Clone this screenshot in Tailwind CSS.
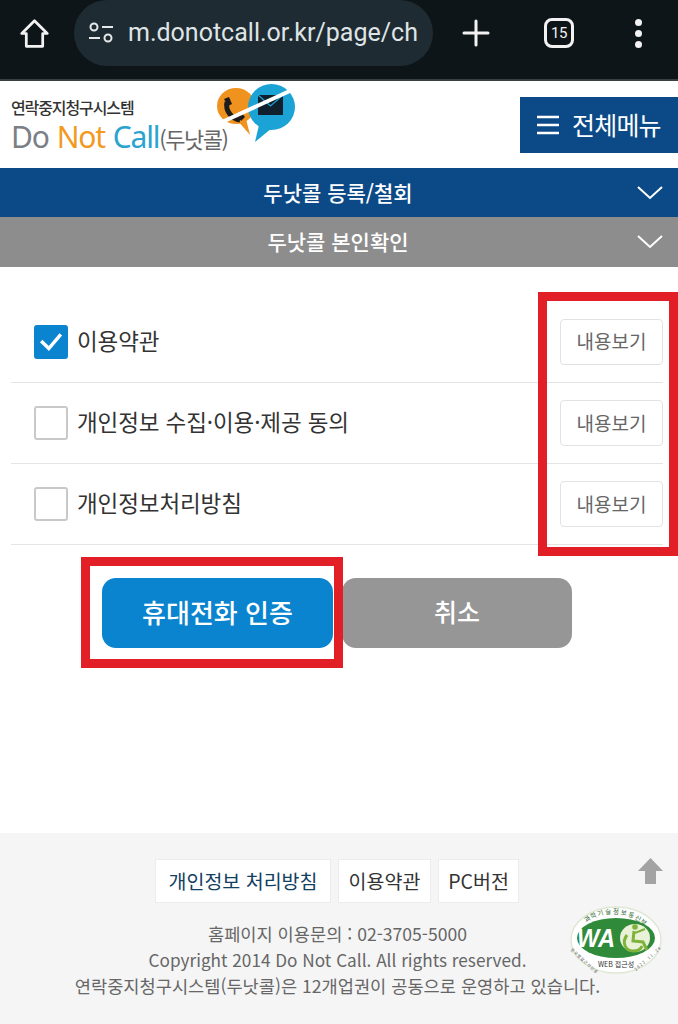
<!DOCTYPE html>
<html lang="ko">
<head>
    <meta charset="UTF-8">
    <meta name="viewport" content="width=device-width, initial-scale=1.0">
    <title>Do Not Call</title>
    <script src="https://cdn.jsdelivr.net/npm/@tailwindcss/browser@4"></script>
</head>
<body class="bg-white font-['Noto_Sans_CJK_KR','Noto_Sans',sans-serif]">
<div class="relative w-[678px] h-[1024px] overflow-hidden flex flex-col">

    <!-- browser bar -->
    <div class="h-[81px] shrink-0 bg-[#0e1519] border-b-2 border-[#3a3f42] flex items-start text-white">
        <div class="w-[74px] h-[66px] pr-[6px] flex items-center justify-center">
            <svg class="w-[31px] h-[31px]" viewBox="0 0 34 34" fill="none" stroke="#f2f2f2" stroke-width="3" stroke-linejoin="round"><path d="M17 3 L3 17 H8 V31 H26 V17 H31 Z"/></svg>
        </div>
        <div class="w-[359px] h-[66px] rounded-[33px] bg-[#1f2b32] flex items-center pl-[14px]">
            <svg class="w-[26px] h-[24px] shrink-0" viewBox="0 0 26 24" fill="none" stroke="#e4e8ea" stroke-width="2"><circle cx="6" cy="6" r="3.5"/><path d="M14 6 H25"/><path d="M1 17 H12"/><circle cx="20" cy="17" r="3.5"/></svg>
            <span class="ml-[14px] font-['Roboto',sans-serif] text-[25px] text-[#dfe4e6] whitespace-nowrap">m.donotcall.or.kr/page/ch</span>
        </div>
        <div class="w-[86px] h-[66px] flex items-center justify-center">
            <svg class="w-[28px] h-[28px]" viewBox="0 0 28 28" stroke="#f2f2f2" stroke-width="3" stroke-linecap="round"><path d="M14 2 V26 M2 14 H26"/></svg>
        </div>
        <div class="w-[80px] h-[66px] flex items-center justify-center">
            <div class="w-[30px] h-[30px] rounded-[8px] border-[3px] border-[#f2f2f2] flex items-center justify-center font-['Roboto',sans-serif] text-[15px] tracking-[-0.5px] text-[#f2f2f2]">15</div>
        </div>
        <div class="flex-1 h-[66px] flex flex-col items-center justify-center gap-[4px]">
            <span class="w-[7px] h-[7px] rounded-full bg-[#f2f2f2]"></span>
            <span class="w-[7px] h-[7px] rounded-full bg-[#f2f2f2]"></span>
            <span class="w-[7px] h-[7px] rounded-full bg-[#f2f2f2]"></span>
        </div>
    </div>

    <!-- site header -->
    <div class="h-[87px] shrink-0 relative flex items-center justify-between pl-[11px]">
        <div class="flex flex-col pt-[3px]">
            <div class="text-[16px] leading-[22px] font-medium tracking-[-1.1px] text-[#333]">연락중지청구시스템</div>
            <div class="flex items-baseline h-[38px] leading-[38px] font-['Noto_Sans',sans-serif] text-[30px] tracking-[-1.2px]">
                <span class="text-[#7b8087]">Do</span>
                <span class="text-[#f29a1f] ml-[8px]">Not</span>
                <span class="text-[#2ba3cf] ml-[8px]">Call</span>
                <span class="text-[22px] text-[#666] font-['Noto_Sans_CJK_KR',sans-serif] tracking-[-1.5px]">(두낫콜)</span>
            </div>
        </div>
        <svg class="absolute left-[214px] top-0 w-[84px] h-[66px]" viewBox="0 0 84 66">
            <ellipse cx="22" cy="25" rx="19" ry="18" fill="#f0921e"/>
            <path d="M24 40 L36 54 L32 38 Z" fill="#f0921e"/>
            <path d="M13 21 C11 30 18 38 26 39" fill="none" stroke="#1c1c1c" stroke-width="5"/>
            <path d="M10 18 L15 16 L18 23 L14 25 Z M23 34 L27 31 L31 36 L27 40 Z" fill="#1c1c1c"/>
            <ellipse cx="57.5" cy="26" rx="23.5" ry="23" fill="#1ba3d6"/>
            <path d="M45 44 L41 61 L58 47 Z" fill="#1ba3d6"/>
            <path d="M44 14 H69 V34 H44 Z" fill="#10202c"/>
            <path d="M44 14 L56.5 25 L69 14" fill="none" stroke="#1ba3d6" stroke-width="1.2"/>
            <path d="M8 41 L78 9" stroke="#fff" stroke-width="4"/>
        </svg>
        <div class="w-[158px] h-[56px] bg-[#0c4a87] flex items-center pl-[17px] gap-[13px] text-white">
            <svg class="w-[22px] h-[20px]" viewBox="0 0 22 20" stroke="#fff" stroke-width="2.6"><path d="M0 2 H22 M0 10 H22 M0 18 H22"/></svg>
            <span class="text-[25px] tracking-[-0.8px] whitespace-nowrap">전체메뉴</span>
        </div>
    </div>

    <!-- accordion bars -->
    <div class="h-[49px] shrink-0 bg-[#0c4a87] relative flex items-center justify-center pr-[2px] text-white text-[21px] font-medium">
        두낫콜 등록/철회
        <svg class="absolute right-[15px] top-[18px] w-[26px] h-[14px]" viewBox="0 0 26 14" fill="none" stroke="#fff" stroke-width="2"><path d="M1 1 L13 12 L25 1"/></svg>
    </div>
    <div class="h-[50px] shrink-0 bg-[#8d8d8d] relative flex items-center justify-center pr-[2px] text-white text-[21px] font-medium">
        두낫콜 본인확인
        <svg class="absolute right-[15px] top-[18px] w-[26px] h-[14px]" viewBox="0 0 26 14" fill="none" stroke="#fff" stroke-width="2"><path d="M1 1 L13 12 L25 1"/></svg>
    </div>

    <!-- agreements -->
    <div class="mx-[11px] w-[652px] mt-[34px] shrink-0 text-[#333] text-[22.5px] tracking-[-0.1px]">
        <div class="h-[82px] border-b border-[#e4e4e4] flex items-center justify-between pl-[23px]">
            <div class="flex items-center gap-[9px]">
                <span class="w-[34px] h-[34px] rounded-[3px] bg-[#0b84cf] flex items-center justify-center">
                    <svg class="w-[24px] h-[20px]" viewBox="0 0 22 18" fill="none" stroke="#fff" stroke-width="3.2"><path d="M2 8 L9 15 L20 2"/></svg>
                </span>
                <span class="-mt-[1px]">이용약관</span>
            </div>
            <span class="w-[103px] h-[46px] rounded-[4px] border border-[#e2e2e2] flex items-center justify-center text-[19px] tracking-normal text-[#666]">내용보기</span>
        </div>
        <div class="h-[81px] border-b border-[#e4e4e4] flex items-center justify-between pl-[23px]">
            <div class="flex items-center gap-[9px]">
                <span class="w-[34px] h-[34px] rounded-[3px] border-2 border-[#c9c9c9] bg-white"></span>
                <span class="-mt-[3px]">개인정보 수집·이용·제공 동의</span>
            </div>
            <span class="w-[103px] h-[46px] rounded-[4px] border border-[#e2e2e2] flex items-center justify-center text-[19px] tracking-normal text-[#666]">내용보기</span>
        </div>
        <div class="h-[81px] border-b border-[#e4e4e4] flex items-center justify-between pl-[23px]">
            <div class="flex items-center gap-[9px]">
                <span class="w-[34px] h-[34px] rounded-[3px] border-2 border-[#c9c9c9] bg-white"></span>
                <span class="-mt-[3px]">개인정보처리방침</span>
            </div>
            <span class="w-[103px] h-[46px] rounded-[4px] border border-[#e2e2e2] flex items-center justify-center text-[19px] tracking-normal text-[#666]">내용보기</span>
        </div>
    </div>

    <!-- action buttons -->
    <div class="mt-[33px] pl-[102px] flex gap-[9px] shrink-0">
        <div class="w-[231px] h-[70px] pb-[3px] rounded-[14px] bg-[#0b84cf] flex items-center justify-center text-white text-[26px] font-medium">휴대전화 인증</div>
        <div class="w-[230px] h-[70px] pb-[3px] rounded-[14px] bg-[#969696] flex items-center justify-center text-white text-[25px] font-medium">취소</div>
    </div>

    <!-- footer -->
    <div class="mt-auto h-[191px] shrink-0 bg-[#f5f5f5] relative">
        <div class="pt-[26px] pl-[155px] flex gap-[7px] text-[19.5px] h-[70px]">
            <div class="w-[176px] h-[44px] bg-white border border-[#ececec] flex items-center justify-center text-[#12405f]">개인정보 처리방침</div>
            <div class="w-[93px] h-[44px] bg-white border border-[#ececec] flex items-center justify-center text-[#333]">이용약관</div>
            <div class="w-[81px] h-[44px] bg-white border border-[#ececec] flex items-center justify-center text-[#333]">PC버전</div>
        </div>
        <div class="pt-[18px] pr-[3px] text-center text-[17.6px] leading-[26px] text-[#666]">
            <p>홈페이지 이용문의 : 02-3705-5000</p>
            <p class="text-[17.2px]">Copyright 2014 Do Not Call. All rights reserved.</p>
            <p>연락중지청구시스템(두낫콜)은 12개업권이 공동으로 운영하고 있습니다.</p>
        </div>
        <svg class="absolute left-[638px] top-[25px] w-[25px] h-[26px]" viewBox="0 0 25 26" fill="#a3a3a3"><path d="M12.5 0 L25 13 H18 V26 H7 V13 H0 Z"/></svg>
        <svg class="absolute left-[567px] top-[67px] w-[98px] h-[84px]" viewBox="0 -4 98 84">
            <ellipse cx="49" cy="36" rx="45" ry="33" fill="#fff" stroke="#dfe8d5" stroke-width="1.5"/>
            <ellipse cx="49" cy="34" rx="39" ry="20" fill="#2f8b3a"/>
            <ellipse cx="68" cy="34" rx="15" ry="14" fill="#e9f1d7"/>
            <path d="M67 27 L66 37 L76 38 L80 46 M60 31 C54 39 59 47 66 47 C71 47 74 45 75 42" fill="none" stroke="#7fb23b" stroke-width="3"/>
            <circle cx="68" cy="23" r="2.8" fill="#7fb23b"/>
            <path d="M68 29 L78 25" stroke="#7fb23b" stroke-width="2"/>
            <text x="29" y="43" font-size="25" font-weight="700" font-style="italic" fill="#fff" text-anchor="middle" font-family="Liberation Sans, sans-serif" textLength="38" lengthAdjust="spacingAndGlyphs">WA</text>
            <text font-size="6.5" fill="#2f6b34" text-anchor="middle" x="22.2 27.7 34.2 41.4 49 56.6 63.8 70.3 75.8" y="18.6 15 12.2 10.6 10 10.6 12.2 15 18.6" rotate="-35 -28 -18 -9 0 9 18 28 35">과학기술정보통신부</text>
            <text x="49" y="63" font-size="7" fill="#333" text-anchor="middle">WEB 접근성</text>
            <text font-size="4" fill="#555" text-anchor="middle" x="5 8.3 11.6 14.9 18.2 21.5 24.8 28" y="46 49 52 55 58 61 64 67" rotate="45 45 45 45 45 45 45 45">한국웹접근성인증</text>
            <text font-size="4" fill="#555" text-anchor="middle" x="70 72.6 75.2 77.8 80.4 83 85.6 88.2 90.8 93.4" y="67 64.7 62.4 60.1 57.8 55.5 53.2 50.9 48.6 46.3" rotate="-42 -42 -42 -42 -42 -42 -42 -42 -42 -42">2022.11.26</text>
        </svg>
    </div>

    <!-- red annotation boxes -->
    <div class="absolute left-[538px] top-[292px] w-[140px] h-[264px] border-[9px] border-[#e21e26]"></div>
    <div class="absolute left-[81px] top-[557px] w-[262px] h-[111px] border-[9px] border-[#e21e26]"></div>
</div>
</body>
</html>
